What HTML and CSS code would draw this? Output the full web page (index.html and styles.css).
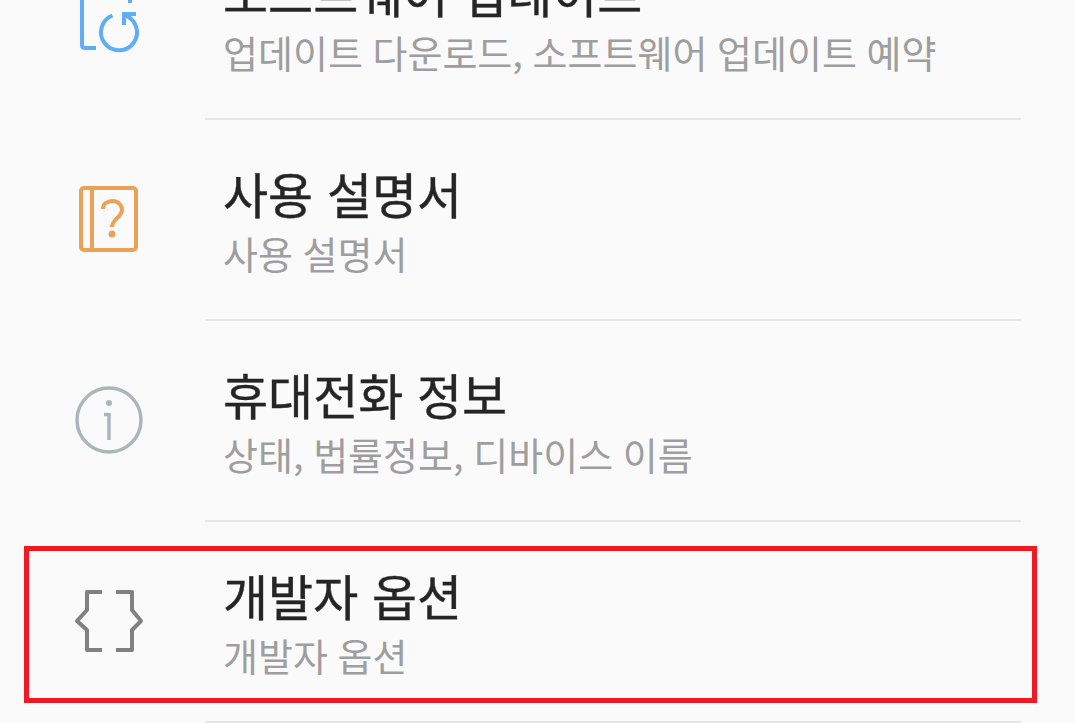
FILE: index.html
```html
<!DOCTYPE html>
<html lang="ko">
<head>
    <meta charset="UTF-8">
    <meta name="viewport" content="width=device-width, initial-scale=1.0">
    <title>설정</title>
    <link rel="stylesheet" href="styles.css">
</head>
<body>

    <div class="settings-list">
        <div class="settings-row">
            <div class="row-icon">
                <svg width="70" height="71" viewBox="0 0 70 71" fill="none" stroke="#5fadf5" stroke-width="4">
                    <path d="M8 -20V61Q8 64 11 64H22"/>
                    <path d="M56 -20V19"/>
                    <path d="M38.500 31.500A18 18 0 1 0 50 31"/>
                    <path d="M62 30H50V41"/>
                </svg>
            </div>
            <div class="row-text">
                <p class="row-title">소프트웨어 업데이트</p>
                <p class="row-sub">업데이트 다운로드, 소프트웨어 업데이트 예약</p>
            </div>
        </div>
        <div class="settings-row">
            <div class="row-icon">
                <svg width="70" height="71" viewBox="0 0 70 71" fill="none" stroke="#e9a258" stroke-width="4">
                    <rect x="7" y="3" width="55" height="62" rx="3"/>
                    <path d="M18 3V65"/>
                    <path d="M29 24C29 19 33 16 38.500 16C44 16 48 20 48 25C48 32 38 34 38 42"/>
                    <circle cx="38" cy="49" r="3.500" fill="#e9a258" stroke="none"/>
                </svg>
            </div>
            <div class="row-text">
                <p class="row-title">사용 설명서</p>
                <p class="row-sub">사용 설명서</p>
            </div>
        </div>
        <div class="settings-row">
            <div class="row-icon">
                <svg width="70" height="71" viewBox="0 0 70 71" fill="none" stroke="#a9b7b8" stroke-width="3.500">
                    <circle cx="35" cy="34" r="32"/>
                    <path d="M35 27V54"/>
                    <path d="M30 28.500H35"/>
                    <circle cx="35" cy="17" r="3" fill="#a9b7b8" stroke="none"/>
                </svg>
            </div>
            <div class="row-text">
                <p class="row-title">휴대전화 정보</p>
                <p class="row-sub">상태, 법률정보, 디바이스 이름</p>
            </div>
        </div>
        <div class="settings-row">
            <div class="row-icon">
                <svg width="70" height="71" viewBox="0 0 70 71" fill="none" stroke="#808080" stroke-width="4" stroke-linejoin="round">
                    <path d="M28 5H13V23L3 34L13 43V63H28"/>
                    <path d="M42 5H58V23L67 34L58 43V63H42"/>
                </svg>
            </div>
            <div class="row-text">
                <p class="row-title">개발자 옵션</p>
                <p class="row-sub">개발자 옵션</p>
            </div>
        </div>
    </div>

    <div class="highlight-box"></div>

</body>
</html>
```

FILE: styles.css
```css
html, body {
    margin: 0;
    height: 100%;
    overflow: hidden;
}

body {
    position: relative;
    font-family: "Noto Sans CJK KR", "Noto Sans", sans-serif;
    background-color: #fafafa;
}

.settings-list {
    margin-top: -81px;
    padding-left: 74px;
    padding-right: 54px;
}

.settings-row {
    display: flex;
    align-items: center;
    height: 201px;
    box-sizing: border-box;
}

.row-icon {
    width: 70px;
    height: 71px;
    flex-shrink: 0;
    margin-right: 61px;
}

.row-icon svg {
    display: block;
    overflow: visible;
}

.row-text {
    flex: 1;
    align-self: stretch;
    box-sizing: border-box;
    padding-left: 18px;
    padding-top: 40px;
    border-bottom: 2px solid #e6e6e6;
}

.row-title {
    margin: 0;
    font-size: 49px;
    font-weight: 400;
    -webkit-text-stroke: 0.4px #252525;
    line-height: 66px;
    color: #252525;
}

.row-sub {
    margin: 0;
    font-size: 38px;
    line-height: 54px;
    word-spacing: -1px;
    color: #9e9e9e;
}

.highlight-box {
    position: absolute;
    left: 24px;
    top: 546px;
    width: 1013px;
    height: 157px;
    box-sizing: border-box;
    border: 5px solid #f01a24;
}
```
